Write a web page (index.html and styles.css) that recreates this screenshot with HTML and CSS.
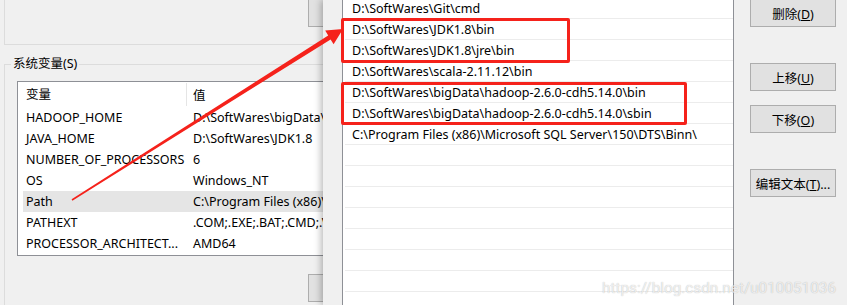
FILE: index.html
```html
<!DOCTYPE html>
<html lang="zh-CN">
<head>
  <meta charset="UTF-8" />
  <title>编辑环境变量</title>
  <link rel="stylesheet" href="styles.css">
</head>
<body>
  <div class="screen">
    <!-- background window: 环境变量 -->
    <div class="env-window">
      <div class="env-inner">
        <div class="user-group">
          <button class="win-btn top-btn"></button>
        </div>

        <fieldset class="sys-group">
          <legend>系统变量(S)</legend>
          <div class="var-list">
            <div class="var-head">
              <span class="col-name">变量</span>
              <span class="col-value">值</span>
            </div>
            <div class="var-row"><span class="col-name">HADOOP_HOME</span><span class="col-value">D:\SoftWares\bigData\hadoop-2.6.0-cdh5.14.0</span></div>
            <div class="var-row"><span class="col-name">JAVA_HOME</span><span class="col-value">D:\SoftWares\JDK1.8</span></div>
            <div class="var-row"><span class="col-name">NUMBER_OF_PROCESSORS</span><span class="col-value">6</span></div>
            <div class="var-row"><span class="col-name">OS</span><span class="col-value">Windows_NT</span></div>
            <div class="var-row selected"><span class="col-name">Path</span><span class="col-value">C:\Program Files (x86)\Microsoft SQL Server</span></div>
            <div class="var-row"><span class="col-name">PATHEXT</span><span class="col-value">.COM;.EXE;.BAT;.CMD;.VBS;.VBE</span></div>
            <div class="var-row"><span class="col-name">PROCESSOR_ARCHITECT...</span><span class="col-value">AMD64</span></div>
          </div>
          <button class="win-btn sys-btn"></button>
        </fieldset>
      </div>
    </div>

    <!-- foreground dialog: 编辑环境变量 -->
    <div class="path-dialog">
      <ul class="path-list">
        <li>D:\SoftWares\Git\cmd</li>
        <li>D:\SoftWares\JDK1.8\bin</li>
        <li>D:\SoftWares\JDK1.8\jre\bin</li>
        <li>D:\SoftWares\scala-2.11.12\bin</li>
        <li>D:\SoftWares\bigData\hadoop-2.6.0-cdh5.14.0\bin</li>
        <li>D:\SoftWares\bigData\hadoop-2.6.0-cdh5.14.0\sbin</li>
        <li>C:\Program Files (x86)\Microsoft SQL Server\150\DTS\Binn\</li>
        <li></li>
        <li></li>
        <li></li>
        <li></li>
        <li></li>
        <li></li>
        <li></li>
        <li></li>
      </ul>
      <div class="side-btns">
        <button class="win-btn btn-delete">删除(<u>D</u>)</button>
        <button class="win-btn btn-up">上移(<u>U</u>)</button>
        <button class="win-btn btn-down">下移(<u>O</u>)</button>
        <button class="win-btn btn-edit">编辑文本(<u>T</u>)...</button>
      </div>
    </div>

    <!-- screenshot annotations -->
    <div class="mark mark-jdk"></div>
    <div class="mark mark-hadoop"></div>
    <svg class="arrow" width="847" height="305" viewBox="0 0 847 305">
      <polygon points="71.6,199.3 328.2,35.5 325.2,30.6 343,29 333.6,44.2 330.6,39.4 72.4,200.7" fill="#f5221b" />
    </svg>
    <div class="watermark">https://blog.csdn.net/u010051036</div>
  </div>
</body>
</html>
```

FILE: styles.css
```css
body {
  margin: 0;
  font-family: "Noto Sans", "Noto Sans CJK SC", sans-serif;
  font-size: 12.5px;
  color: #000;
  background: #f0f0f0;
}

.screen {
  position: relative;
  display: flex;
  width: 847px;
  height: 305px;
  overflow: hidden;
}

.win-btn {
  display: block;
  box-sizing: border-box;
  height: 28px;
  padding: 0;
  background: #e1e1e1;
  border: 1px solid #adadad;
  font-family: inherit;
  font-size: 12.5px;
  color: #000;
}

/* background window */
.env-window {
  flex: none;
  width: 323px;
  overflow: hidden;
  background: #f0f0f0;
}

.env-inner {
  width: 420px;
}

.user-group {
  box-sizing: border-box;
  height: 46px;
  margin-left: 4px;
  border-left: 1px solid #dcdcdc;
  border-bottom: 1px solid #dcdcdc;
}

.top-btn {
  width: 75px;
  margin: -1px 0 0 303px;
}

.sys-group {
  margin: 11px 0 0 4px;
  padding: 0;
  min-width: 0;
  height: 300px;
  border: 1px solid #dcdcdc;
}

.sys-group legend {
  margin-left: 6px;
  padding: 0 2px;
  line-height: 16px;
}

.var-list {
  box-sizing: border-box;
  width: 340px;
  margin: 9px 0 0 12px;
  padding: 0 0 1px 5px;
  background: #fff;
  border: 1px solid #8e9096;
  white-space: nowrap;
}

.var-head,
.var-row {
  display: flex;
  align-items: center;
}

.var-head {
  height: 25px;
}

.var-row {
  height: 21px;
}

.var-row.selected {
  background: #e5e5e5;
}

.col-name {
  flex: none;
  box-sizing: border-box;
  width: 164px;
  padding-left: 3px;
}

.var-head .col-name {
  height: 23px;
  line-height: 23px;
  border-right: 1px solid #e5e5e5;
}

.col-value {
  padding-left: 6px;
}

.sys-btn {
  width: 75px;
  margin: 18px 0 0 303px;
}

/* foreground dialog */
.path-dialog {
  flex: 1;
  display: flex;
  padding-left: 19px;
  background: #f0f0f0;
  box-shadow: -2px 0 7px rgba(0, 0, 0, 0.28);
}

.path-list {
  box-sizing: border-box;
  width: 392px;
  height: 330px;
  margin: -2px 0 0;
  padding: 0 0 0 1px;
  list-style: none;
  background: #fff;
  border-left: 1px solid #8e9096;
  border-right: 1px solid #8e9096;
  white-space: nowrap;
}

.path-list li {
  box-sizing: border-box;
  height: 21px;
  margin-left: 1px;
  padding-left: 7px;
  line-height: 21px;
  border-bottom: 1px solid #ececec;
}

.side-btns {
  display: flex;
  flex-direction: column;
  margin-left: 16px;
}

.side-btns .win-btn {
  width: 86px;
}

.btn-delete {
  margin-top: -1px;
}

.btn-up {
  margin-top: 36px;
}

.btn-down {
  margin-top: 14px;
}

.btn-edit {
  margin-top: 36px;
}

/* annotations */
.mark {
  position: absolute;
  box-sizing: border-box;
  border: 3px solid #f5221b;
  border-radius: 2px;
}

.mark-jdk {
  left: 341px;
  top: 18px;
  width: 229px;
  height: 45px;
}

.mark-hadoop {
  left: 341px;
  top: 82px;
  width: 346px;
  height: 43px;
}

.arrow {
  position: absolute;
  left: 0;
  top: 0;
}

.watermark {
  position: absolute;
  right: 11px;
  bottom: 8px;
  font-family: Roboto, "Liberation Sans", sans-serif;
  font-size: 15.3px;
  color: rgba(255, 255, 255, 0.75);
  text-shadow: 0 0 1px rgba(0, 0, 0, 0.3);
}
```
